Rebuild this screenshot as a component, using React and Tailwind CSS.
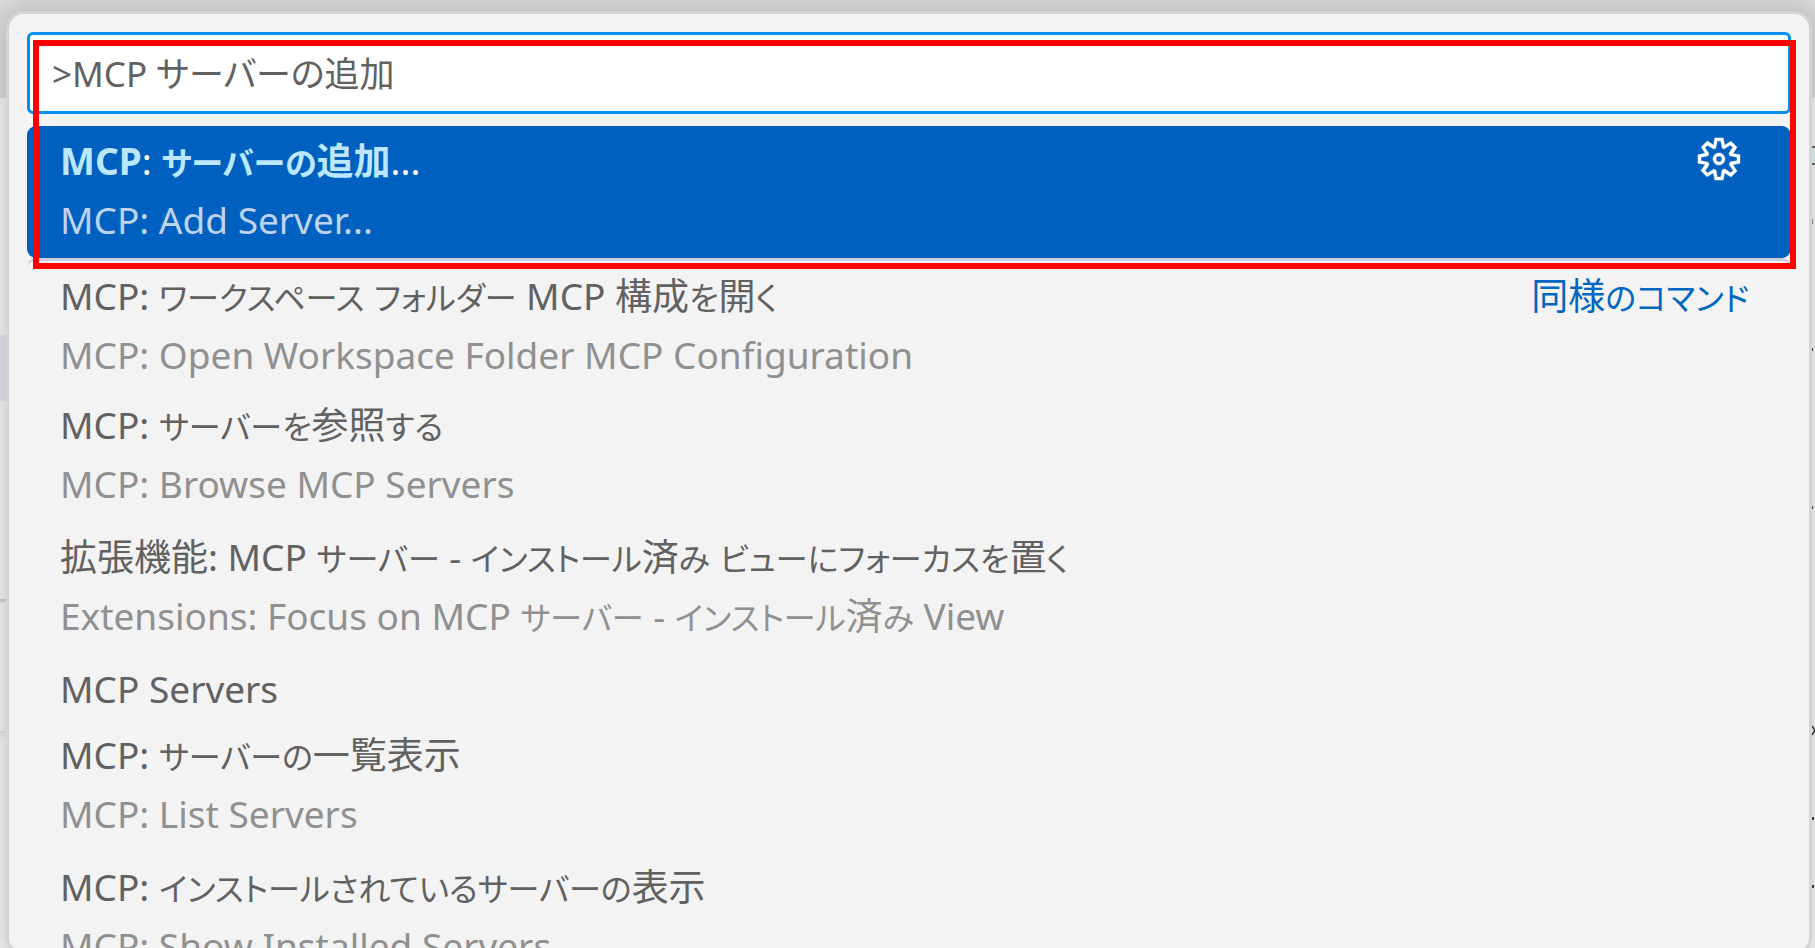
const items = [
  { title: 'MCP: ワークスペース フォルダー MCP 構成を開く', detail: 'MCP: Open Workspace Folder MCP Configuration', hint: '同様のコマンド' },
  { title: 'MCP: サーバーを参照する', detail: 'MCP: Browse MCP Servers' },
  { title: '拡張機能: MCP サーバー - インストール済み ビューにフォーカスを置く', detail: 'Extensions: Focus on MCP サーバー - インストール済み View' },
  { title: 'MCP Servers' },
  { title: 'MCP: サーバーの一覧表示', detail: 'MCP: List Servers' },
  { title: 'MCP: インストールされているサーバーの表示', detail: 'MCP: Show Installed Servers' },
];

// Kana runs are set a little smaller than the kanji and Latin text beside them.
function Label({ text }) {
  return text.split(/([\u3040-\u30ff]+)/).map((part, i) =>
    i % 2 ? (
      <span key={i} lang="ja" className="text-[32px] leading-none">{part}</span>
    ) : (
      part
    ),
  );
}

function GearIcon() {
  return (
    <svg viewBox="0 0 16 16" className="size-12" fill="currentColor" fillRule="evenodd" stroke="currentColor" strokeWidth="0.15" aria-hidden="true">
      <path d="M9.1 4.4L8.6 2H7.4l-.5 2.4-.7.3-2-1.3-.9.8 1.3 2-.2.7-2.4.5v1.2l2.4.5.3.8-1.3 2 .8.8 2-1.3.8.3.4 2.3h1.2l.5-2.4.8-.3 2 1.3.8-.8-1.3-2 .3-.8 2.3-.4V7.4l-2.4-.5-.3-.8 1.3-2-.8-.8-2 1.3-.7-.2zM9.4 1l.5 2.4L12 2.1l2 2-1.4 2.1 2.4.4v2.8l-2.4.5L14 12l-2 2-2.1-1.4-.5 2.4H6.6l-.5-2.4L4 13.9l-2-2 1.4-2.1L1 9.4V6.6l2.4-.5L2.1 4l2-2 2.1 1.4.4-2.4h2.8zm.6 7c0 1.1-.9 2-2 2s-2-.9-2-2 .9-2 2-2 2 .9 2 2zM8 9c.6 0 1-.4 1-1s-.4-1-1-1-1 .4-1 1 .4 1 1 1z" />
    </svg>
  );
}

function Backdrop() {
  return (
    <div className="flex h-full flex-col" aria-hidden="true">
      <div className="h-[98px] bg-[#dddddd]" />
      <div className="flex flex-1 justify-between bg-[#f8f8f8]">
        <div className="w-1/4 bg-[#f3f3f3] pt-[237px]">
          <div className="h-[66px] bg-[#e4e6f1]" />
          <div className="mt-[198px] h-[3px] bg-[#d4d4d4]" />
          <div className="mt-[129px] h-2 bg-linear-to-b from-[#e4e4e4] to-[#f3f3f3]" />
        </div>
        <svg className="h-[850px] w-[3px]" viewBox="0 98 3 850">
          <path fill="#e2f6f6" d="M0 149h3v14H0z" />
          <path fill="#6b6b6b" d="M0 146h3v2H0zM0 163h3v2H0z" />
          <path fill="#999" d="M0 219h1v5H0z" />
          <path fill="#444" d="M0 348h1v3H0zM0 506h1v3H0zM0 817h2v3H0zM0 885h2v3H0z" />
          <path fill="none" stroke="#333" strokeWidth="1.5" d="M0 726l3 4-3 5" />
        </svg>
      </div>
    </div>
  );
}

export default function App() {
  return (
    <div className="relative h-screen overflow-hidden font-['Noto_Sans','Noto_Sans_CJK_JP',sans-serif] text-[37px] leading-[59px] text-[#616161] [font-feature-settings:'palt']">
      <Backdrop />
      <div className="absolute top-[11px] right-[3px] -bottom-[7px] left-[6px] overflow-hidden rounded-[18px] border-3 border-[#d4d4d4] bg-[#f3f3f3] px-[18px] pt-[18px] shadow-[0_0_24px_6px_rgba(0,0,0,0.16)]">
        <input
          aria-label="コマンド"
          defaultValue=">MCP サーバーの追加"
          className="block h-[82px] w-full rounded-md border-3 border-[#0090f1] bg-white pr-5 pb-1 pl-[22px] text-[35px] outline-none"
        />
        <ul className="mt-3">
          <li className="flex h-[132px] justify-between rounded-[9px] bg-[#0060c0] pt-[5px] pr-12 pl-[33px] text-white">
            <div>
              <div>
                <b className="text-[#bbe7ff]">MCP</b>: <b className="text-[#bbe7ff]"><Label text="サーバーの追加" /></b>...
              </div>
              <div className="text-[#bfd2ee]">MCP: Add Server...</div>
            </div>
            <button type="button" aria-label="設定" className="mt-1 size-12">
              <GearIcon />
            </button>
          </li>
          {items.map((it, i) => (
            <li
              key={it.title}
              className={`flex justify-between rounded-[9px] pt-[5px] pr-[42px] pl-[33px] ${it.detail ? 'h-[132px]' : 'h-[66px]'} ${i === 0 ? 'border-t-3 border-[#cccedb]' : ''}`}
            >
              <div>
                <div><Label text={it.title} /></div>
                {it.detail && <div className="text-[#909090]"><Label text={it.detail} /></div>}
              </div>
              {it.hint && <div className="text-[#0066bf]"><Label text={it.hint} /></div>}
            </li>
          ))}
        </ul>
      </div>
      <div className="pointer-events-none absolute top-10 right-[19px] left-[33px] h-[229px] border-6 border-[#ff0000]" />
    </div>
  );
}
